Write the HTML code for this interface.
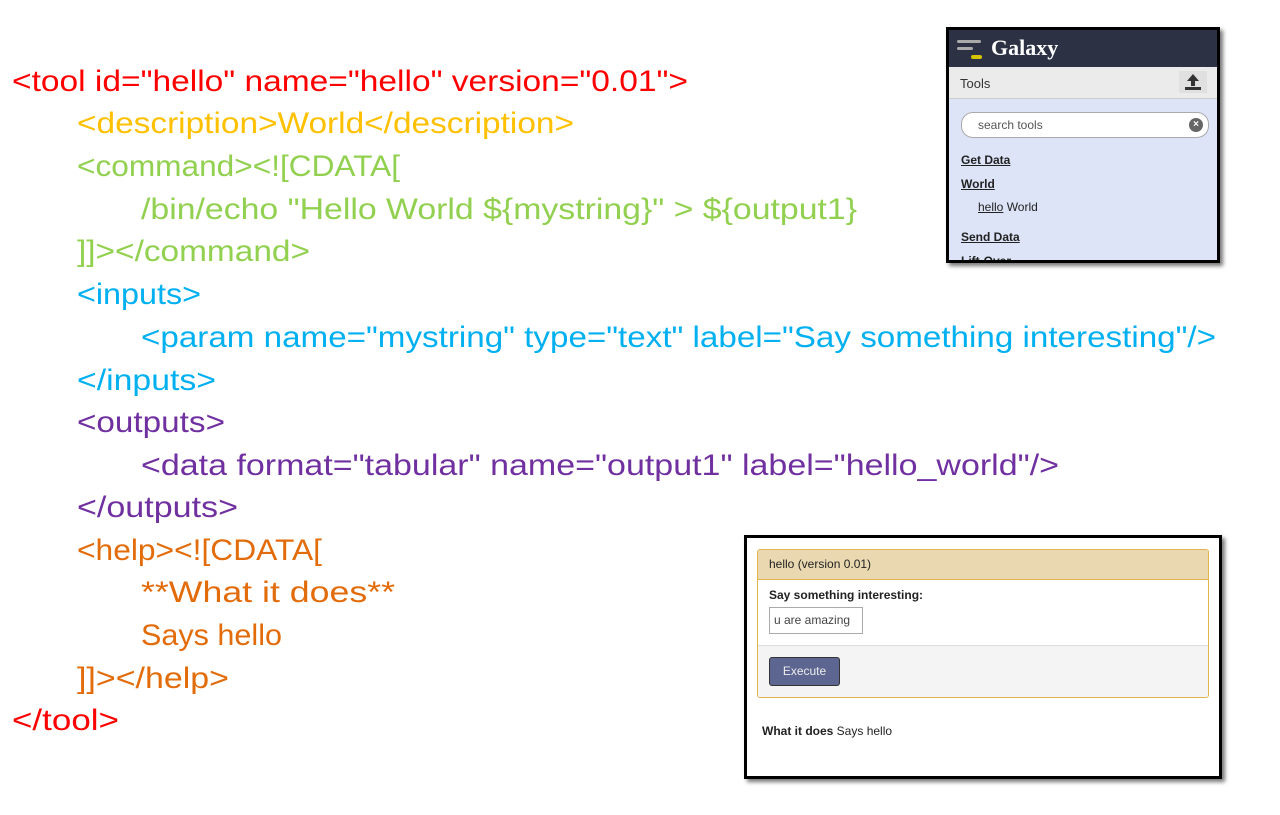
<!DOCTYPE html>
<html><head><meta charset="utf-8"><style>
body{margin:0;width:1280px;height:815px;background:#fff;position:relative;overflow:hidden;font-family:"Liberation Sans",sans-serif}
.abs{position:absolute}
svg text{font-family:"Liberation Sans",sans-serif;font-size:30px}
.g{left:946px;top:27px;width:268px;height:230px;border:3px solid #000;box-shadow:3px 3px 4px #777;background:#dde4f7;overflow:hidden}
.f{left:744px;top:535px;width:472px;height:238px;border:3px solid #000;box-shadow:3px 3px 4px #777;background:#fff}
a{color:#222;text-decoration:underline}
</style></head><body>
<svg class="abs" style="left:0;top:0" width="1280" height="815">
<text x="12" y="91" fill="#ff0000" textLength="676" lengthAdjust="spacingAndGlyphs">&lt;tool id="hello" name="hello" version="0.01"&gt;</text>
<text x="77" y="133" fill="#ffc000" textLength="497" lengthAdjust="spacingAndGlyphs">&lt;description&gt;World&lt;/description&gt;</text>
<text x="77" y="176" fill="#92d050" textLength="323" lengthAdjust="spacingAndGlyphs">&lt;command&gt;&lt;![CDATA[</text>
<text x="141" y="219" fill="#92d050" textLength="716" lengthAdjust="spacingAndGlyphs">/bin/echo "Hello World ${mystring}" &gt; ${output1}</text>
<text x="77" y="261" fill="#92d050" textLength="233" lengthAdjust="spacingAndGlyphs">]]&gt;&lt;/command&gt;</text>
<text x="77" y="304" fill="#00b0f0" textLength="124" lengthAdjust="spacingAndGlyphs">&lt;inputs&gt;</text>
<text x="141" y="347" fill="#00b0f0" textLength="1075" lengthAdjust="spacingAndGlyphs">&lt;param name="mystring" type="text" label="Say something interesting"/&gt;</text>
<text x="77" y="390" fill="#00b0f0" textLength="139" lengthAdjust="spacingAndGlyphs">&lt;/inputs&gt;</text>
<text x="77" y="432" fill="#7030a0" textLength="148" lengthAdjust="spacingAndGlyphs">&lt;outputs&gt;</text>
<text x="141" y="475" fill="#7030a0" textLength="918" lengthAdjust="spacingAndGlyphs">&lt;data format="tabular" name="output1" label="hello_world"/&gt;</text>
<text x="77" y="517" fill="#7030a0" textLength="161" lengthAdjust="spacingAndGlyphs">&lt;/outputs&gt;</text>
<text x="77" y="560" fill="#e36c0a" textLength="245" lengthAdjust="spacingAndGlyphs">&lt;help&gt;&lt;![CDATA[</text>
<text x="141" y="602" fill="#e36c0a" textLength="254" lengthAdjust="spacingAndGlyphs">**What it does**</text>
<text x="141" y="645" fill="#e36c0a" textLength="141" lengthAdjust="spacingAndGlyphs">Says hello</text>
<text x="77" y="688" fill="#e36c0a" textLength="152" lengthAdjust="spacingAndGlyphs">]]&gt;&lt;/help&gt;</text>
<text x="12" y="730" fill="#ff0000" textLength="107" lengthAdjust="spacingAndGlyphs">&lt;/tool&gt;</text>
</svg>

<div class="abs g">
 <div style="height:37px;background:#2c3143;position:relative">
  <div class="abs" style="left:8px;top:10px;width:24px;height:3px;background:#aaa;border-radius:2px"></div>
  <div class="abs" style="left:8px;top:17px;width:16px;height:3px;background:#aaa;border-radius:2px"></div>
  <div class="abs" style="left:22px;top:25px;width:11px;height:4px;background:#d6c400;border-radius:2px"></div>
  <div class="abs" style="left:42px;top:5px;color:#fff;font:bold 22px 'Liberation Serif',serif">Galaxy</div>
 </div>
 <div style="height:31px;background:#ebebeb;border-bottom:1px solid #ccc;position:relative;font-size:13px;color:#333">
  <div class="abs" style="left:11px;top:9px">Tools</div>
  <div class="abs" style="left:230px;top:4px;width:28px;height:22px;background:#e0e0e0">
   <svg width="28" height="22" viewBox="0 0 28 22"><path d="M14 3 L8 10 H12 V15 H16 V10 H20 Z" fill="#333"/><rect x="6" y="16" width="16" height="3" fill="#333"/></svg>
  </div>
 </div>
 <div class="abs" style="left:12px;top:82px;width:246px;height:24px;background:#fff;border:1px solid #aaa;border-radius:12px;font-size:12px;color:#555;line-height:24px;text-indent:16px">search tools
  <div class="abs" style="right:5px;top:5px;width:14px;height:14px;border-radius:7px;background:#666;color:#fff;font-size:10px;line-height:14px;text-indent:0;text-align:center;font-weight:bold">×</div></div>
 <div class="abs" style="left:12px;top:123px;font-size:12px;font-weight:bold"><a>Get Data</a></div>
 <div class="abs" style="left:12px;top:147px;font-size:12px;font-weight:bold"><a>World</a></div>
 <div class="abs" style="left:29px;top:170px;font-size:12px;color:#222"><a>hello</a> World</div>
 <div class="abs" style="left:12px;top:200px;font-size:12px;font-weight:bold"><a>Send Data</a></div>
 <div class="abs" style="left:12px;top:224px;font-size:12px;font-weight:bold"><a>Lift-Over</a></div>
</div>

<div class="abs f">
 <div class="abs" style="left:10px;top:11px;width:450px;height:147px;border:1px solid #e0b54f;border-radius:3px;overflow:hidden">
  <div style="height:29px;background:#ead9b0;border-bottom:1px solid #e0b54f;font-size:12px;line-height:29px;padding-left:11px;color:#222">hello (version 0.01)</div>
  <div style="height:65px;position:relative;border-bottom:1px solid #ddd">
   <div class="abs" style="left:11px;top:8px;font-size:12px;font-weight:bold;color:#222">Say something interesting:</div>
   <div class="abs" style="left:11px;top:27px;width:92px;height:25px;border:1px solid #aaa;font-size:12px;line-height:25px;text-indent:4px;color:#444">u are amazing</div>
  </div>
  <div style="height:52px;background:#f4f4f4;position:relative">
   <div class="abs" style="left:11px;top:11px;width:69px;height:27px;background:#5c6690;border:1px solid #333;border-radius:3px;color:#eee;font-size:12px;text-align:center;line-height:27px">Execute</div>
  </div>
 </div>
 <div class="abs" style="left:15px;top:186px;font-size:12px;color:#222"><b>What it does</b> Says hello</div>
</div>
</body></html>
